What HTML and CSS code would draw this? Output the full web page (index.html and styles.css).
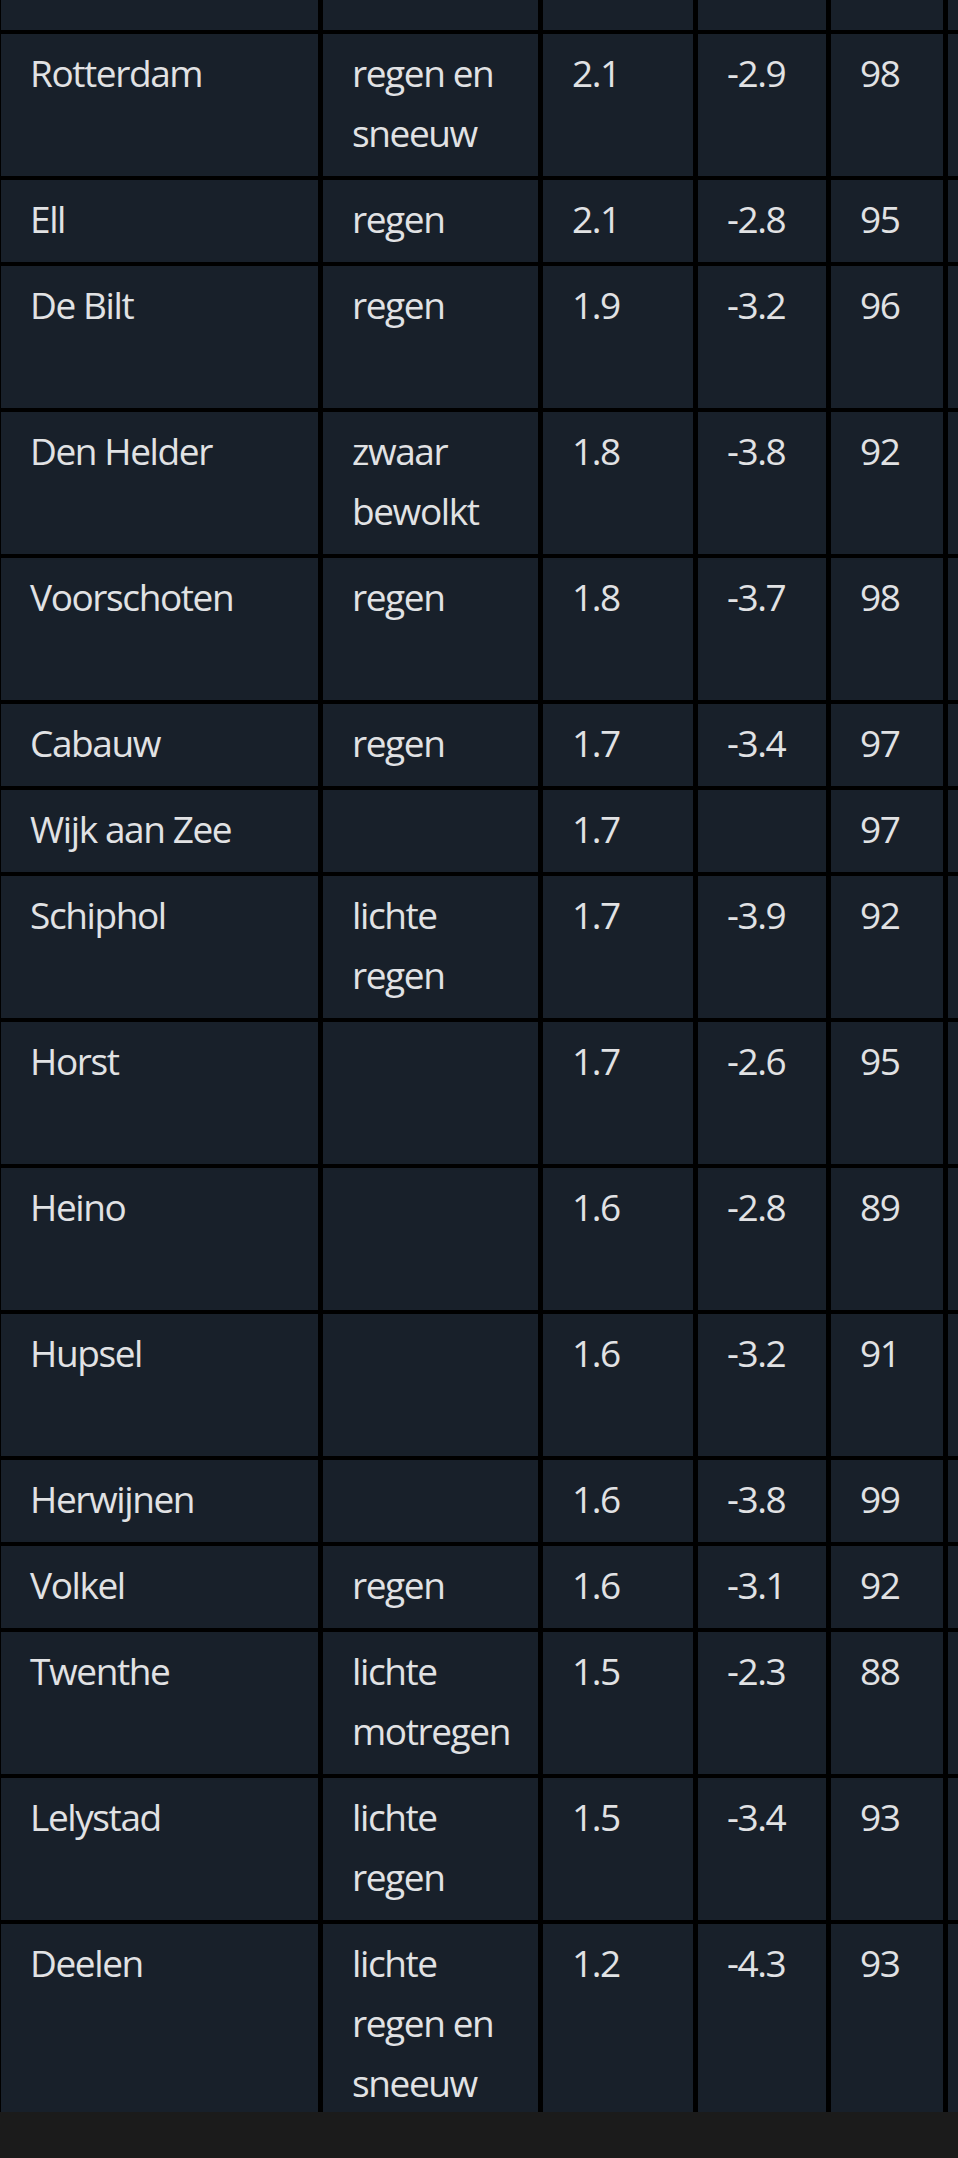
FILE: index.html
```html
<!DOCTYPE html>
<html lang="nl">
<head>
<meta charset="utf-8">
<title>Waarnemingen</title>
<link rel="stylesheet" href="styles.css">
</head>
<body>
<div class="scroller">
<table class="obs">
<tbody>
<tr class="filler"><td class="c1"></td><td class="c2"></td><td class="c3"></td><td class="c4"></td><td class="c5"></td><td class="c6"></td></tr>
<tr class="tall"><td>Rotterdam</td><td>regen en sneeuw</td><td>2.1</td><td>-2.9</td><td>98</td><td></td></tr>
<tr><td>Ell</td><td>regen</td><td>2.1</td><td>-2.8</td><td>95</td><td></td></tr>
<tr class="tall"><td>De Bilt</td><td>regen</td><td>1.9</td><td>-3.2</td><td>96</td><td></td></tr>
<tr class="tall"><td>Den Helder</td><td>zwaar bewolkt</td><td>1.8</td><td>-3.8</td><td>92</td><td></td></tr>
<tr class="tall"><td>Voorschoten</td><td>regen</td><td>1.8</td><td>-3.7</td><td>98</td><td></td></tr>
<tr><td>Cabauw</td><td>regen</td><td>1.7</td><td>-3.4</td><td>97</td><td></td></tr>
<tr><td>Wijk aan Zee</td><td></td><td>1.7</td><td></td><td>97</td><td></td></tr>
<tr class="tall"><td>Schiphol</td><td>lichte regen</td><td>1.7</td><td>-3.9</td><td>92</td><td></td></tr>
<tr class="tall"><td>Horst</td><td></td><td>1.7</td><td>-2.6</td><td>95</td><td></td></tr>
<tr class="tall"><td>Heino</td><td></td><td>1.6</td><td>-2.8</td><td>89</td><td></td></tr>
<tr class="tall"><td>Hupsel</td><td></td><td>1.6</td><td>-3.2</td><td>91</td><td></td></tr>
<tr><td>Herwijnen</td><td></td><td>1.6</td><td>-3.8</td><td>99</td><td></td></tr>
<tr><td>Volkel</td><td>regen</td><td>1.6</td><td>-3.1</td><td>92</td><td></td></tr>
<tr class="tall"><td>Twenthe</td><td>lichte motregen</td><td>1.5</td><td>-2.3</td><td>88</td><td></td></tr>
<tr class="tall"><td>Lelystad</td><td>lichte regen</td><td>1.5</td><td>-3.4</td><td>93</td><td></td></tr>
<tr><td>Deelen</td><td>lichte regen en sneeuw</td><td>1.2</td><td>-4.3</td><td>93</td><td></td></tr>
</tbody>
</table>
</div>
<div class="bottombar"></div>
</body>
</html>
```
FILE: styles.css
```css
html, body {
  margin: 0;
  padding: 0;
  background: #1b1b1b;
}
.scroller {
  width: 958px;
  height: 2112px;
  overflow: hidden;
  background: #000;
}
.obs {
  table-layout: fixed;
  width: 1152px;
  border-collapse: separate;
  border-spacing: 5px 4px;
  margin: -4px 0 0 -4px;
  background: #000;
  font-family: "Open Sans", "Noto Sans", sans-serif;
  font-size: 37px;
  letter-spacing: -1.4px;
  line-height: 60px;
  color: #e1e2e4;
}
.obs td {
  background: #18202a;
  vertical-align: top;
  padding: 9px 22px 13px 29px;
  box-sizing: border-box;
  white-space: normal;
}
.obs .filler td {
  height: 30px;
  padding: 0;
}
.obs .c1 { width: 317px; }
.obs .c2 { width: 215px; }
.obs .c3 { width: 150px; }
.obs .c4 { width: 128px; }
.obs .c5 { width: 112px; }
.obs .c6 { width: 200px; }
.obs .tall td {
  height: 142px;
}
.bottombar {
  height: 46px;
  background: #1b1b1b;
}
```
